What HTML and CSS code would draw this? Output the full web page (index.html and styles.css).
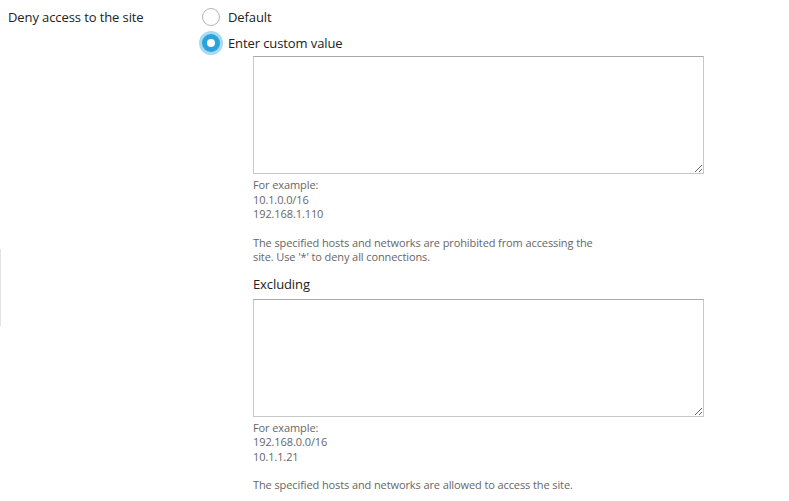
FILE: index.html
```html
<!DOCTYPE html>
<html>
<head>
<meta charset="utf-8">
<link rel="stylesheet" href="styles.css">
</head>
<body>
<div class="edge"></div>
<div class="row">
  <div class="label">Deny access to the site</div>
  <div class="field">
    <label class="option"><span class="radio"></span><span>Default</span></label>
    <label class="option"><span class="radio checked"><span class="dot"></span></span><span>Enter custom value</span></label>
    <div class="custom">
      <textarea class="area"></textarea>
      <div class="hint">For example:<br>10.1.0.0/16<br>192.168.1.110</div>
      <div class="hint para">The specified hosts and networks are prohibited from accessing the<br>site. Use '*' to deny all connections.</div>
      <div class="sub">Excluding</div>
      <textarea class="area"></textarea>
      <div class="hint">For example:<br>192.168.0.0/16<br>10.1.1.21</div>
      <div class="hint para">The specified hosts and networks are allowed to access the site.</div>
    </div>
  </div>
</div>
</body>
</html>
```
FILE: styles.css
```css
html, body {
  margin: 0;
  padding: 0;
  background: #fff;
}
body {
  font-family: "Open Sans", "Noto Sans", sans-serif;
  color: #222;
  font-size: 13px;
  letter-spacing: -0.1px;
  position: relative;
}
.edge {
  position: absolute;
  left: 0;
  top: 249px;
  width: 1px;
  height: 77px;
  background: #e3e3e3;
}
.row {
  display: flex;
  padding: 8px 0 0 8px;
}
.label {
  width: 194px;
  line-height: 18px;
}
.field {
  display: flex;
  flex-direction: column;
}
.option {
  display: flex;
  align-items: center;
  gap: 8px;
  height: 18px;
  margin-bottom: 8px;
  line-height: 18px;
}
.radio {
  box-sizing: border-box;
  width: 18px;
  height: 18px;
  border-radius: 50%;
  border: 1px solid #b5b5b5;
  background: #fff;
  display: flex;
  align-items: center;
  justify-content: center;
}
.radio.checked {
  border: none;
  background: #29a3dc;
  box-shadow: 0 0 0 3px #a9d9f1;
}
.dot {
  width: 8px;
  height: 8px;
  border-radius: 50%;
  background: #fff;
}
.custom {
  margin-left: 51px;
  margin-top: -4px;
  display: flex;
  flex-direction: column;
}
.area {
  box-sizing: border-box;
  width: 451px;
  height: 118px;
  margin: 0;
  border: 1px solid #c8c8c8;
  border-top-color: #a9a9a9;
  border-radius: 0;
  resize: vertical;
  display: block;
}
.hint {
  font-size: 11px;
  line-height: 14.5px;
  color: #666;
  margin-top: 4px;
}
.hint.para {
  margin-top: 14px;
}
.sub {
  font-size: 13px;
  line-height: 18px;
  margin-top: 10px;
  margin-bottom: 6px;
}
```
